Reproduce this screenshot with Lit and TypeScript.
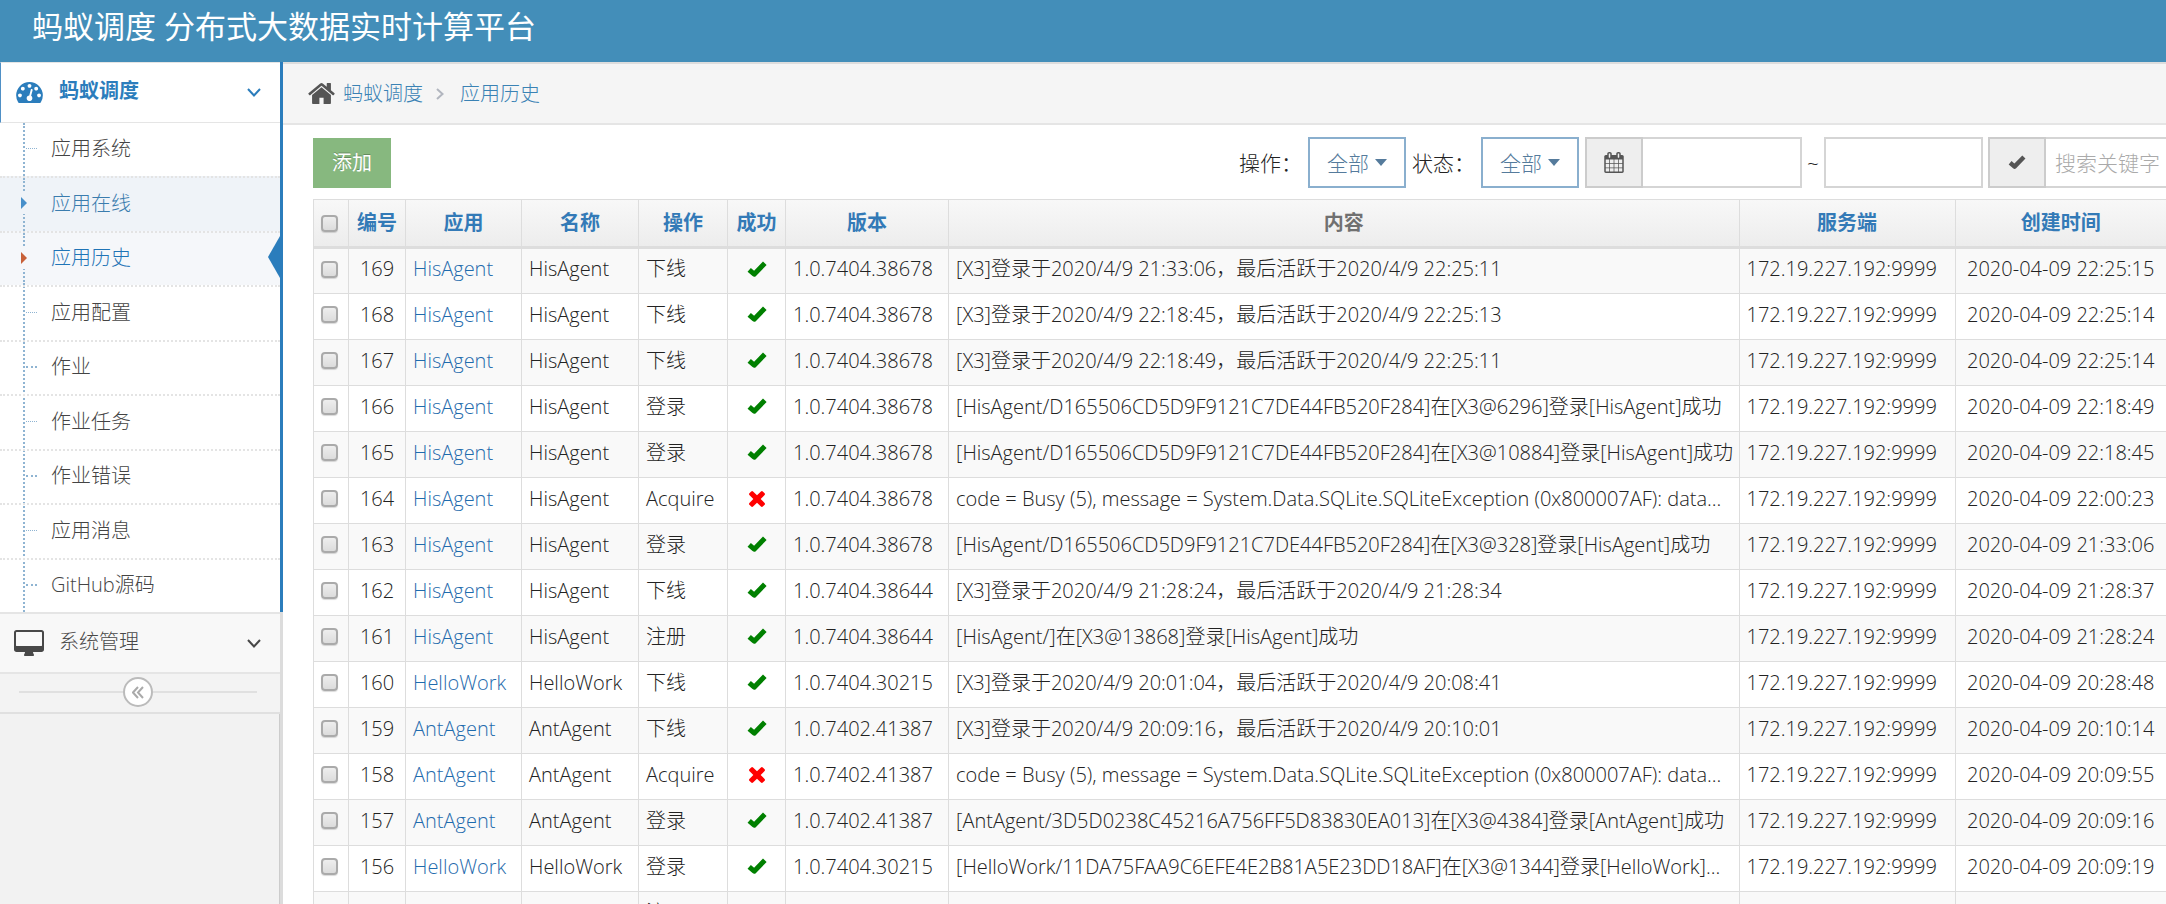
import { LitElement, html, css, svg, nothing } from "lit";
import { customElement, state } from "lit/decorators.js";
import { classMap } from "lit/directives/class-map.js";

interface LogRow {
  id: string;
  app: string;
  name: string;
  action: string;
  ok: boolean | null;
  version: string;
  content: string;
  server: string;
  time: string;
}

const SERVER = "172.19.227.192:9999";

const row = (id: string, app: string, action: string, ok: boolean, version: string, content: string, time: string): LogRow => ({
  id, app, name: app, action, ok, version, content, server: SERVER, time: `2020-04-09 ${time}`,
});

const BUSY = "code = Busy (5), message = System.Data.SQLite.SQLiteException (0x800007AF): data...";

const ROWS: LogRow[] = [
  row("169", "HisAgent", "下线", true, "1.0.7404.38678", "[X3]登录于2020/4/9 21:33:06，最后活跃于2020/4/9 22:25:11", "22:25:15"),
  row("168", "HisAgent", "下线", true, "1.0.7404.38678", "[X3]登录于2020/4/9 22:18:45，最后活跃于2020/4/9 22:25:13", "22:25:14"),
  row("167", "HisAgent", "下线", true, "1.0.7404.38678", "[X3]登录于2020/4/9 22:18:49，最后活跃于2020/4/9 22:25:11", "22:25:14"),
  row("166", "HisAgent", "登录", true, "1.0.7404.38678", "[HisAgent/D165506CD5D9F9121C7DE44FB520F284]在[X3@6296]登录[HisAgent]成功", "22:18:49"),
  row("165", "HisAgent", "登录", true, "1.0.7404.38678", "[HisAgent/D165506CD5D9F9121C7DE44FB520F284]在[X3@10884]登录[HisAgent]成功", "22:18:45"),
  row("164", "HisAgent", "Acquire", false, "1.0.7404.38678", BUSY, "22:00:23"),
  row("163", "HisAgent", "登录", true, "1.0.7404.38678", "[HisAgent/D165506CD5D9F9121C7DE44FB520F284]在[X3@328]登录[HisAgent]成功", "21:33:06"),
  row("162", "HisAgent", "下线", true, "1.0.7404.38644", "[X3]登录于2020/4/9 21:28:24，最后活跃于2020/4/9 21:28:34", "21:28:37"),
  row("161", "HisAgent", "注册", true, "1.0.7404.38644", "[HisAgent/]在[X3@13868]登录[HisAgent]成功", "21:28:24"),
  row("160", "HelloWork", "下线", true, "1.0.7404.30215", "[X3]登录于2020/4/9 20:01:04，最后活跃于2020/4/9 20:08:41", "20:28:48"),
  row("159", "AntAgent", "下线", true, "1.0.7402.41387", "[X3]登录于2020/4/9 20:09:16，最后活跃于2020/4/9 20:10:01", "20:10:14"),
  row("158", "AntAgent", "Acquire", false, "1.0.7402.41387", BUSY, "20:09:55"),
  row("157", "AntAgent", "登录", true, "1.0.7402.41387", "[AntAgent/3D5D0238C45216A756FF5D83830EA013]在[X3@4384]登录[AntAgent]成功", "20:09:16"),
  row("156", "HelloWork", "登录", true, "1.0.7404.30215", "[HelloWork/11DA75FAA9C6EFE4E2B81A5E23DD18AF]在[X3@1344]登录[HelloWork]...", "20:09:19"),
  { id: "", app: "", name: "", action: "注册", ok: null, version: "", content: "", server: "", time: "" },
];

const COLUMNS = [
  { key: "id", label: "编号", sortable: true },
  { key: "app", label: "应用", sortable: true },
  { key: "name", label: "名称", sortable: true },
  { key: "action", label: "操作", sortable: true },
  { key: "ok", label: "成功", sortable: true },
  { key: "version", label: "版本", sortable: true },
  { key: "content", label: "内容", sortable: false },
  { key: "server", label: "服务端", sortable: true },
  { key: "time", label: "创建时间", sortable: true },
];

const MENU = ["应用系统", "应用在线", "应用历史", "应用配置", "作业", "作业任务", "作业错误", "应用消息", "GitHub源码"];

const icon = (box: string, w: number, h: number, body: unknown) =>
  html`<svg viewBox=${box} width=${w} height=${h} fill="currentColor" aria-hidden="true">${body}</svg>`;

const checkPath = svg`<path d="M2.2 8.8L7.2 13.2L17.8 2.2" fill="none" stroke="currentColor" stroke-width="5" stroke-linejoin="round"/>`;
const timesPath = svg`<path d="M1490 1322q0 40-28 68l-136 136q-28 28-68 28t-68-28l-294-294-294 294q-28 28-68 28t-68-28l-136-136q-28-28-28-68t28-68l294-294-294-294q-28-28-28-68t28-68l136-136q28-28 68-28t68 28l294 294 294-294q28-28 68-28t68 28l136 136q28 28 28 68t-28 68l-294 294 294 294q28 28 28 68z"/>`;
const gaugePath = svg`<path d="M384 1152q0-53-37.5-90.5t-90.5-37.5-90.5 37.5-37.5 90.5 37.5 90.5 90.5 37.5 90.5-37.5 37.5-90.5zm192-448q0-53-37.5-90.5t-90.5-37.5-90.5 37.5-37.5 90.5 37.5 90.5 90.5 37.5 90.5-37.5 37.5-90.5zm428 481l101-382q6-26-7.5-48.5t-38.5-29.5-48 6.5-30 39.5l-101 382q-60 5-107 43.5t-63 98.5q-20 77 20 146t117 89 146-20 89-117q16-60-6-117t-72-91zm660-33q0-53-37.5-90.5t-90.5-37.5-90.5 37.5-37.5 90.5 37.5 90.5 90.5 37.5 90.5-37.5 37.5-90.5zm-640-640q0-53-37.5-90.5t-90.5-37.5-90.5 37.5-37.5 90.5 37.5 90.5 90.5 37.5 90.5-37.5 37.5-90.5zm448 192q0-53-37.5-90.5t-90.5-37.5-90.5 37.5-37.5 90.5 37.5 90.5 90.5 37.5 90.5-37.5 37.5-90.5zm320 448q0 261-141 483-19 29-54 29h-1402q-35 0-54-29-141-221-141-483 0-182 71-348t191-286 286-191 348-71 348 71 286 191 191 286 71 348z"/>`;
const homePath = svg`<path d="M1472 992v480q0 26-19 45t-45 19h-384v-384h-256v384h-384q-26 0-45-19t-19-45v-480q0-1 .5-3t.5-3l575-474 575 474q1 2 1 6zm223-69l-62 74q-8 9-21 11h-3q-13 0-21-7l-692-577-692 577q-12 8-24 7-13-2-21-11l-62-74q-8-10-7-23.5t11-21.5l719-599q32-26 76-26t76 26l244 204v-195q0-14 9-23t23-9h192q14 0 23 9t9 23v408l219 182q10 8 11 21.5t-7 23.5z"/>`;
const desktopPath = svg`<path d="M1728 992v-832q0-13-9.5-22.5t-22.5-9.5h-1600q-13 0-22.5 9.5t-9.5 22.5v832q0 13 9.5 22.5t22.5 9.5h1600q13 0 22.5-9.5t9.5-22.5zm128-832v1088q0 66-47 113t-113 47h-544q0 37 16 77.5t32 71 16 43.5q0 26-19 45t-45 19h-512q-26 0-45-19t-19-45q0-14 16-44t32-70 16-78h-544q-66 0-113-47t-47-113v-1088q0-66 47-113t113-47h1600q66 0 113 47t47 113z"/>`;
const calendarPath = svg`<path d="M192 1664h288v-288h-288v288zm352 0h320v-288h-320v288zm-352-352h288v-320h-288v320zm352 0h320v-320h-320v320zm-352-384h288v-288h-288v288zm736 736h320v-288h-320v288zm-384-736h320v-288h-320v288zm768 736h288v-288h-288v288zm-384-352h320v-320h-320v320zm-352-864v-288q0-13-9.5-22.5t-22.5-9.5h-64q-13 0-22.5 9.5t-9.5 22.5v288q0 13 9.5 22.5t22.5 9.5h64q13 0 22.5-9.5t9.5-22.5zm736 864h288v-320h-288v320zm-384-384h320v-288h-320v288zm384 0h288v-288h-288v288zm32-480v-288q0-13-9.5-22.5t-22.5-9.5h-64q-13 0-22.5 9.5t-9.5 22.5v288q0 13 9.5 22.5t22.5 9.5h64q13 0 22.5-9.5t9.5-22.5zm384-64v1280q0 52-38 90t-90 38h-1408q-52 0-90-38t-38-90v-1280q0-52 38-90t90-38h128v-96q0-66 47-113t113-47h64q66 0 113 47t47 113v96h384v-96q0-66 47-113t113-47h64q66 0 113 47t47 113v96h128q52 0 90 38t38 90z"/>`;
const stroke = (d: string, w: number) => svg`<path d=${d} fill="none" stroke="currentColor" stroke-width=${w}/>`;

@customElement("app-root")
export class AppRoot extends LitElement {
  @state() private current = "应用历史";
  @state() private hovered = "应用在线";

  static styles = css`
    :host {
      display: block;
      font-family: "Open Sans", "Noto Sans CJK SC", sans-serif;
      font-size: 20px;
      font-weight: 300;
      line-height: 28px;
      color: #222;
    }
    * { box-sizing: border-box; }
    a { color: inherit; text-decoration: none; }
    svg { display: block; flex: none; }
    button, input, select { font: inherit; color: inherit; margin: 0; border-radius: 0; }
    .shell {
      display: flex;
      flex-direction: column;
      height: 100vh;
      overflow: hidden;
      background: #fff;
    }
    .navbar {
      flex: none;
      height: 62px;
      padding: 6px 32px 0;
      background: #438eb9;
      color: #fff;
      font-size: 31px;
      font-weight: 400;
      line-height: 40px;
    }
    .body { flex: 1; display: flex; min-height: 0; }

    .sidebar {
      flex: none;
      width: 283px;
      background: #f2f2f2;
      border-right: 3px solid #dcdcdc;
      box-shadow: inset -1px 0 0 #ccc;
    }
    .menu, .submenu { margin: 0; padding: 0; list-style: none; }
    .group.open { margin-right: -3px; border-right: 3px solid #2b7dbc; background: #fff; }
    .heading {
      display: flex;
      align-items: center;
      gap: 16px;
      height: 61px;
      padding: 0 19px 0 16px;
      border: solid #e5e5e5;
      border-width: 1px 0;
    }
    .heading span { flex: 1; padding-bottom: 3px; }
    .open .heading {
      padding-left: 15px;
      border-left: 1px solid #4f90c6;
      color: #2b7dbc;
      font-weight: 700;
    }
    .closed .heading {
      height: 62px;
      gap: 15px;
      padding-left: 14px;
      border-width: 2px 0;
      background: #f8f8f8;
      color: #484848;
    }
    .submenu { position: relative; }
    .submenu::before {
      content: "";
      position: absolute;
      inset: 0 auto 0 23px;
      border-left: 2px dotted #8fb4d2;
    }
    .item { border-top: 2px dotted #e4e4e4; height: 54px; position: relative; color: #444; }
    .item:first-child { border-top: 0; height: 53px; }
    .item:nth-child(even) { height: 55px; }
    .item a { display: flex; align-items: center; height: 100%; padding: 0 0 2px 51px; }
    .item a::before {
      content: "";
      position: absolute;
      left: 26px;
      top: 25px;
      width: 11px;
      border-top: 1px dotted #8fb4d2;
    }
    .item:nth-child(odd):not(:first-child) a::before { border-top-width: 2px; top: 24px; }
    .item.hover, .item.active { z-index: 0; }
    .item.hover { background: #eff3f8; color: #3a7cae; }
    .item.active { background: #f5f7fa; color: #1f74b6; }
    .item.hover::before, .item.active::before {
      content: "";
      position: absolute;
      inset: 0 auto 0 23px;
      border-left: 2px dotted #8fb4d2;
    }
    .item.hover a::before, .item.active a::before { display: none; }
    .marker {
      position: absolute;
      left: 21px;
      top: 14px;
      padding: 5px 0;
      background: #eff3f8;
      color: #478fca;
    }
    .active .marker { background: #f5f7fa; color: #c86139; }
    .pointer { position: absolute; right: 0; top: 3px; color: #2b7dbc; }

    .collapse {
      display: flex;
      align-items: center;
      height: 40px;
      padding: 0 23px 2px 19px;
      background: #f3f3f3;
      border-bottom: 2px solid #e0e0e0;
    }
    .collapse::before, .collapse::after { content: ""; flex: 1; height: 2px; background: #e0e0e0; }
    .collapse button {
      display: grid;
      place-items: center;
      width: 30px;
      height: 30px;
      padding: 0;
      border: 2px solid #bbb;
      border-radius: 50%;
      background: #fff;
      color: #aaa;
    }

    .main { flex: 1; min-width: 0; }
    .crumbs {
      display: flex;
      align-items: center;
      height: 63px;
      padding: 0 25px;
      background: #f5f5f5;
      border: solid #e5e5e5;
      border-width: 2px 0;
      border-top-color: #ddd;
      color: #3a82b4;
    }
    .crumbs ol { display: flex; align-items: center; margin: 0 0 0 8px; padding: 0; list-style: none; }
    .crumbs li { display: flex; align-items: center; }
    .home { color: #555; }
    .sep { color: #b2b6bf; margin: 0 16px 0 13px; }

    .content { padding: 12px 0 0 30px; }
    .toolbar { display: flex; align-items: center; height: 51px; }
    .add {
      height: 50px;
      padding: 0 19px;
      margin-right: auto;
      border: 0;
      background: #87b87f;
      color: #fff;
      font-weight: 400;
      text-shadow: 0 -1px 0 rgba(0, 0, 0, 0.25);
    }
    .search { display: flex; align-items: center; height: 51px; font-size: 21px; }
    .search label { margin-right: 6px; }
    .picker {
      display: flex;
      align-items: center;
      gap: 5px;
      width: 98px;
      height: 51px;
      margin-right: 6px;
      padding-left: 17px;
      border: 2px solid #8aafce;
      color: #557b9c;
    }
    .picker select {
      appearance: none;
      width: 43px;
      padding: 0;
      border: 0;
      background: none;
      color: inherit;
    }
    .addon {
      display: grid;
      place-items: center;
      width: 58px;
      height: 51px;
      border: 2px solid #ccc;
      background: #eee;
      color: #555;
    }
    .date { width: 159px; }
    .search input {
      height: 51px;
      padding: 0 7px;
      border: 2px solid #d5d5d5;
      background: #fff;
      outline: 0;
    }
    .addon + input { border-left: 0; }
    .till { width: 22px; text-align: center; }
    .search .keyword { width: 120px; padding: 0 0 0 9px; border-right: 0; }
    .keyword::placeholder { color: #aaa; opacity: 1; }
    .gap { margin-right: 5px; }

    table {
      width: 100%;
      margin-top: 11px;
      table-layout: fixed;
      border-collapse: collapse;
      border: 1px solid #ddd;
      border-right: 0;
    }
    .c-check { width: 35px; }
    .c-id { width: 57px; }
    .c-app { width: 116px; }
    .c-name { width: 117px; }
    .c-action { width: 89px; }
    .c-ok { width: 58px; }
    .c-version { width: 163px; }
    .c-server { width: 216px; }
    .c-time { width: 211px; }
    th, td {
      border-left: 1px solid #ddd;
      padding: 6px 0 10px 7px;
      overflow: hidden;
      white-space: nowrap;
    }
    th {
      height: 47px;
      padding: 7px;
      border-bottom: 3px solid #ddd;
      color: #707070;
      font-weight: 700;
      line-height: 32px;
      text-align: center;
    }
    thead tr { background: linear-gradient(#f8f8f8, #ececec); }
    th a { color: #337ab7; }
    td { height: 46px; border-bottom: 1px solid #ddd; }
    tbody tr:nth-child(odd) { background: #f9f9f9; }
    td a { color: #1f6bad; }
    td.center, td.ok, td.fail { padding-right: 7px; text-align: center; }
    .ok { color: #008000; }
    .fail { color: #f00; }
    .ok svg, .fail svg { margin: 0 auto; }
    .tick {
      display: block;
      appearance: none;
      width: 17px;
      height: 17px;
      border: 2px solid #aaa;
      border-radius: 4px;
      background: linear-gradient(#eee, #dcdcdc);
      box-shadow: 0 1px 1px rgba(0, 0, 0, 0.15);
    }
  `;

  private renderItem(label: string) {
    const active = label === this.current;
    const hover = !active && label === this.hovered;
    return html`
      <li class=${classMap({ item: true, active, hover })} @mouseenter=${() => (this.hovered = label)}>
        <a href="#" @click=${() => (this.current = label)}>${label}</a>
        ${active || hover
          ? html`<span class="marker">${icon("0 0 6 12", 6, 12, svg`<path d="M0 0L6 6L0 12z"/>`)}</span>`
          : nothing}
        ${active ? html`<span class="pointer">${icon("0 0 12 42", 12, 42, svg`<path d="M12 0V42L0 21z"/>`)}</span>` : nothing}
      </li>`;
  }

  private renderRow(r: LogRow) {
    return html`
      <tr>
        <td><input class="tick" type="checkbox" aria-label="选择" /></td>
        <td class="center">${r.id}</td>
        <td><a href="#">${r.app}</a></td>
        <td>${r.name}</td>
        <td>${r.action}</td>
        <td class=${r.ok ? "ok" : "fail"}>
          ${r.ok === null
            ? nothing
            : r.ok
              ? icon("0 0 20 17", 20, 17, checkPath)
              : icon("302 366 1188 1188", 16, 16, timesPath)}
        </td>
        <td>${r.version}</td>
        <td>${r.content}</td>
        <td>${r.server}</td>
        <td class="center">${r.time}</td>
      </tr>`;
  }

  private renderPicker(id: string, label: string) {
    return html`
      <label for=${id}>${label}：</label>
      <div class="picker">
        <select id=${id}><option>全部</option></select>
        ${icon("0 0 12 7", 12, 7, svg`<path d="M0 0H12L6 7z"/>`)}
      </div>`;
  }

  render() {
    const chevron = icon("0 0 14 9", 14, 9, stroke("M1 1L7 7.5L13 1", 2));
    return html`
      <div class="shell">
        <header class="navbar"><a href="#">蚂蚁调度 分布式大数据实时计算平台</a></header>
        <div class="body">
          <nav class="sidebar">
            <ul class="menu">
              <li class="group open">
                <a class="heading" href="#">
                  ${icon("0 256 1792 1408", 27, 21, gaugePath)}<span>蚂蚁调度</span>${chevron}
                </a>
                <ul class="submenu">${MENU.map((m) => this.renderItem(m))}</ul>
              </li>
              <li class="group closed">
                <a class="heading" href="#">
                  ${icon("-64 0 1920 1664", 30, 26, desktopPath)}<span>系统管理</span>${chevron}
                </a>
              </li>
            </ul>
            <div class="collapse">
              <button type="button" aria-label="折叠">
                ${icon("0 0 12 13", 12, 13, stroke("M6 1L1 6.5L6 12M11 1L6 6.5L11 12", 2))}
              </button>
            </div>
          </nav>
          <main class="main">
            <nav class="crumbs">
              <span class="home">${icon("89 253 1614 1283", 27, 21, homePath)}</span>
              <ol>
                <li><a href="#">蚂蚁调度</a></li>
                <li><span class="sep">${icon("0 0 8 12", 8, 12, stroke("M1 1L6.5 6L1 11", 2))}</span><a href="#">应用历史</a></li>
              </ol>
            </nav>
            <div class="content">
              <div class="toolbar">
                <button class="add" type="button">添加</button>
                <form class="search">
                  ${this.renderPicker("action", "操作")} ${this.renderPicker("status", "状态")}
                  <span class="addon">${icon("64 0 1664 1792", 20, 21, calendarPath)}</span>
                  <input class="date" type="text" aria-label="开始日期" />
                  <span class="till">~</span>
                  <input class="date gap" type="text" aria-label="结束日期" />
                  <span class="addon">${icon("0 0 20 17", 18, 15, checkPath)}</span>
                  <input class="keyword" type="text" placeholder="搜索关键字" aria-label="搜索关键字" />
                </form>
              </div>
              <table>
                <colgroup>
                  <col class="c-check" />
                  ${COLUMNS.map((c) => html`<col class="c-${c.key}" />`)}
                </colgroup>
                <thead>
                  <tr>
                    <th><input class="tick" type="checkbox" aria-label="全选" /></th>
                    ${COLUMNS.map((c) => html`<th scope="col">${c.sortable ? html`<a href="#">${c.label}</a>` : c.label}</th>`)}
                  </tr>
                </thead>
                <tbody>${ROWS.map((r) => this.renderRow(r))}</tbody>
              </table>
            </div>
          </main>
        </div>
      </div>`;
  }
}
